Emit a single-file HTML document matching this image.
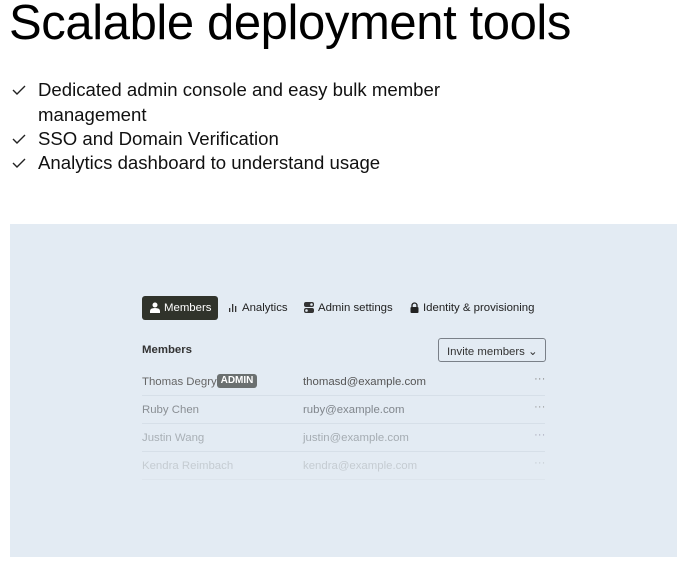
<!DOCTYPE html><html><head><style>
body{margin:0;width:693px;height:572px;background:#fff;font-family:"Liberation Sans",sans-serif;position:relative;overflow:hidden}
.a{position:absolute;white-space:nowrap}
h1{position:absolute;left:9px;top:-5px;margin:0;font-size:49px;font-weight:400;letter-spacing:-0.4px;color:#000}
.li{position:absolute;left:38px;font-size:18.6px;color:#111}
.ck{position:absolute;left:12px;width:14px;height:14px}
.p{position:absolute;left:10px;top:224px;width:667px;height:333px;background:#e3ebf3}
.s{font-size:11.4px}
.r{position:absolute;left:142px;width:403px;height:1px;background:#d6dfe8}
</style></head><body>
<h1>Scalable deployment tools</h1>
<svg class="ck" style="top:83px" viewBox="0 0 14 14"><path d="M1 7l4 4 8-8" fill="none" stroke="#222" stroke-width="1.4"/></svg>
<div class="li" style="top:79px">Dedicated admin console and easy bulk member</div>
<div class="li" style="top:104px">management</div>
<svg class="ck" style="top:132px" viewBox="0 0 14 14"><path d="M1 7l4 4 8-8" fill="none" stroke="#222" stroke-width="1.4"/></svg>
<div class="li" style="top:128px">SSO and Domain Verification</div>
<svg class="ck" style="top:156px" viewBox="0 0 14 14"><path d="M1 7l4 4 8-8" fill="none" stroke="#222" stroke-width="1.4"/></svg>
<div class="li" style="top:152px">Analytics dashboard to understand usage</div>
<div class="p"></div>
<div class="a" style="left:142px;top:296px;width:76px;height:24px;background:#30332b;border-radius:3px"></div>
<svg class="a" style="left:150px;top:302px" width="10" height="11" viewBox="0 0 10 11"><circle cx="5" cy="3" r="2.5" fill="#fff"/><path d="M0 11v-2q0-3 5-3t5 3v2z" fill="#fff"/></svg>
<div class="a s" style="left:164px;top:302px;color:#fff">Members</div>
<svg class="a" style="left:229px;top:303px" width="9" height="9"><rect x="0" y="5" width="1.3" height="4" fill="#333"/><rect x="3" y="1" width="1.3" height="8" fill="#333"/><rect x="6" y="3" width="1.3" height="6" fill="#333"/></svg>
<div class="a s" style="left:242px;top:302px;color:#222">Analytics</div>
<svg class="a" style="left:304px;top:302px" width="10" height="11"><rect x="0" y="0" width="10" height="5" rx="2" fill="#333"/><rect x="0" y="6" width="10" height="5" rx="2" fill="#333"/><circle cx="7.5" cy="2.5" r="1.3" fill="#e3ebf3"/><circle cx="2.5" cy="8.5" r="1.3" fill="#e3ebf3"/></svg>
<div class="a s" style="left:318px;top:302px;color:#222">Admin settings</div>
<svg class="a" style="left:410px;top:302px" width="9" height="11"><path d="M2 5V3.5a2.5 2.5 0 0 1 5 0V5" fill="none" stroke="#222" stroke-width="1.3"/><rect x="0.5" y="5" width="8" height="6" rx="1" fill="#222"/></svg>
<div class="a s" style="left:423px;top:302px;color:#222">Identity &amp; provisioning</div>
<div class="a s" style="left:142px;top:344px;font-weight:700;color:#333">Members</div>
<div class="a" style="left:438px;top:338px;width:106px;height:22px;border:1px solid #7a8088;border-radius:3px"></div>
<div class="a s" style="left:447px;top:344px;color:#333">Invite members ⌄</div>
<div class="a s" style="left:142px;top:376px;color:#666">Thomas Degry</div>
<div class="a" style="left:217px;top:374px;width:40px;height:14px;background:#6b7070;border-radius:3px;color:#fff;font-size:10px;font-weight:700;text-align:center;line-height:14px">ADMIN</div>
<div class="a s" style="left:303px;top:376px;color:#555">thomasd@example.com</div>
<div class="a s" style="left:534px;top:373px;color:#888">···</div>
<div class="r" style="top:395px"></div>
<div class="a s" style="left:142px;top:404px;color:#8a8f94">Ruby Chen</div>
<div class="a s" style="left:303px;top:404px;color:#80868c">ruby@example.com</div>
<div class="a s" style="left:534px;top:401px;color:#999">···</div>
<div class="r" style="top:423px"></div>
<div class="a s" style="left:142px;top:432px;color:#a9b0b6">Justin Wang</div>
<div class="a s" style="left:303px;top:432px;color:#a5acb2">justin@example.com</div>
<div class="a s" style="left:534px;top:429px;color:#aab">···</div>
<div class="r" style="top:451px"></div>
<div class="a s" style="left:142px;top:460px;color:#c5ccd2">Kendra Reimbach</div>
<div class="a s" style="left:303px;top:460px;color:#c5ccd2">kendra@example.com</div>
<div class="a s" style="left:534px;top:457px;color:#c5ccd2">···</div>
<div class="r" style="top:479px;background:#dde5ed"></div>
</body></html>
